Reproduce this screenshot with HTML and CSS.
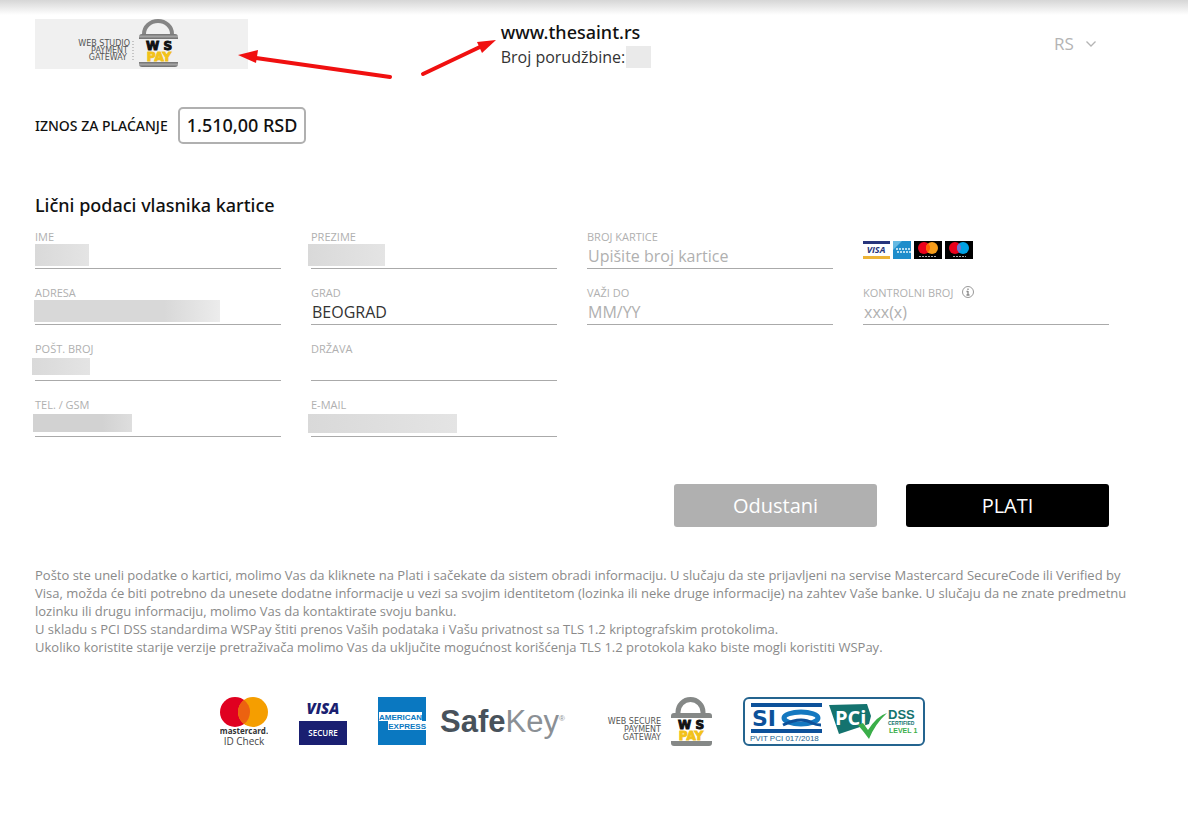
FILE: index.html
```html
<!DOCTYPE html>
<html lang="sr">
<head>
  <meta charset="UTF-8">
  <meta name="viewport" content="width=device-width, initial-scale=1.0">
  <title>WSPay</title>
  <link rel="stylesheet" href="styles.css">
</head>
<body>
  <div class="page">
    <header class="header">
      <div class="logo">
        <svg width="213" height="50" viewBox="0 0 213 50" role="img" aria-label="WSPay">
          <defs>
            <linearGradient id="steel" x1="0" y1="0" x2="0" y2="1">
              <stop offset="0" stop-color="#707070"/>
              <stop offset="0.5" stop-color="#a2a2a2"/>
              <stop offset="1" stop-color="#6c6c6c"/>
            </linearGradient>
          </defs>
          <g class="logo-caption" text-anchor="end">
            <text x="95" y="27">WEB STUDIO</text>
            <text x="93" y="34">PAYMENT</text>
            <text x="92" y="41">GATEWAY</text>
          </g>
          <path d="M98 22v20" stroke="#999" stroke-dasharray="1 2"/>
          <path d="M109 16v-1a14 13 0 0 1 28 0v1" fill="none" stroke="#858585" stroke-width="4"/>
          <path d="M104 20v-2q0-3 3-3h33q3 0 3 3v2z" fill="url(#steel)"/>
          <path d="M104 43h39v2q0 3-3 3h-33q-3 0-3-3z" fill="url(#steel)"/>
          <text class="lock-text" x="124" y="31" text-anchor="middle">W S</text>
          <text class="lock-text lock-gold" x="124" y="42" text-anchor="middle">PAY</text>
        </svg>
      </div>
      <div class="shop">
        <a class="shop-name" href="#">www.thesaint.rs</a>
        <div class="order">Broj porudžbine: <span class="order-mask"></span></div>
      </div>
      <label class="lang">
        <select aria-label="Jezik">
          <option>RS</option>
          <option>EN</option>
        </select>
        <svg width="12" height="8" viewBox="0 0 12 8"><path d="M1.500 1.500l4.500 4.500 4.500-4.500" fill="none" stroke="#b4b4b4" stroke-width="1.300"/></svg>
      </label>
    </header>

    <svg class="arrows" width="270" height="50" viewBox="0 0 270 50">
      <g stroke="#f01010" stroke-width="4" stroke-linecap="round">
        <path d="M152 45L18 26"/>
        <path d="M185 42L244 14"/>
      </g>
      <path d="M0 23L20 18L18 31z" fill="#f01010"/>
      <path d="M258 8L239 10L244 21z" fill="#f01010"/>
    </svg>

    <div class="amount">
      <span class="amount-label">IZNOS ZA PLAĆANJE</span>
      <span class="amount-value">1.510,00 RSD</span>
    </div>

    <form>
      <h1>Lični podaci vlasnika kartice</h1>
      <div class="fields">
        <div class="field">
          <label for="ime">IME</label>
          <input type="text" id="ime">
          <span class="mask mask-ime"></span>
        </div>
        <div class="field">
          <label for="prezime">PREZIME</label>
          <input type="text" id="prezime">
          <span class="mask mask-prezime"></span>
        </div>
        <div class="field">
          <label for="kartica">BROJ KARTICE</label>
          <input type="text" id="kartica" placeholder="Upišite broj kartice">
        </div>
        <div class="cards">
          <svg width="27" height="18" viewBox="0 0 27 18">
            <path d="M0 0h27v3H0z" fill="#28357c"/>
            <path d="M0 15h27v3H0z" fill="#edb436"/>
            <text class="visa-small" x="13" y="12" text-anchor="middle">VISA</text>
          </svg>
          <svg width="18" height="18" viewBox="0 0 18 18">
            <path d="M0 0h18v18H0z" fill="#1f8dcb"/>
            <path d="M0 0h9L0 9z" fill="#65b9e2"/>
            <path d="M3 8h14M4 11h14" stroke="#b5dcf1" stroke-width="2" stroke-dasharray="2 1"/>
          </svg>
          <svg width="28" height="18" viewBox="0 0 28 18">
            <path d="M0 0h28v18H0z" fill="#000"/>
            <circle cx="10" cy="7" r="6" fill="#eb001b"/>
            <circle cx="18" cy="7" r="6" fill="#f79e1b"/>
            <path d="M14 2.500a6 6 0 0 1 0 9a6 6 0 0 1 0-9z" fill="#ff5f00"/>
            <path d="M5 15.500h18" stroke="#aaa" stroke-dasharray="2 1"/>
          </svg>
          <svg width="28" height="18" viewBox="0 0 28 18">
            <path d="M0 0h28v18H0z" fill="#000"/>
            <circle cx="10" cy="7" r="6" fill="#eb001b"/>
            <circle cx="18" cy="7" r="6" fill="#00a2e5"/>
            <path d="M14 2.500a6 6 0 0 1 0 9a6 6 0 0 1 0-9z" fill="#7375cf"/>
            <path d="M8 15.500h13" stroke="#aaa" stroke-dasharray="2 1"/>
          </svg>
        </div>

        <div class="field">
          <label for="adresa">ADRESA</label>
          <input type="text" id="adresa">
          <span class="mask mask-adresa"></span>
        </div>
        <div class="field">
          <label for="grad">GRAD</label>
          <input type="text" id="grad" value="BEOGRAD">
        </div>
        <div class="field">
          <label for="vazi">VAŽI DO</label>
          <input type="text" id="vazi" placeholder="MM/YY">
        </div>
        <div class="field">
          <label for="cvv">KONTROLNI BROJ
            <svg width="14" height="14" viewBox="0 0 14 14">
              <circle cx="7" cy="7" r="5.500" fill="none" stroke="#999"/>
              <path d="M7 3.500v1.500M7 6v4M5.500 6.500h1.500M5.500 10h3" stroke="#888" stroke-width="1.300"/>
            </svg>
          </label>
          <input type="text" id="cvv" placeholder="xxx(x)">
        </div>

        <div class="field first">
          <label for="posta">POŠT. BROJ</label>
          <input type="text" id="posta">
          <span class="mask mask-posta"></span>
        </div>
        <div class="field">
          <label for="drzava">DRŽAVA</label>
          <input type="text" id="drzava">
        </div>

        <div class="field first">
          <label for="tel">TEL. / GSM</label>
          <input type="text" id="tel">
          <span class="mask mask-tel"></span>
        </div>
        <div class="field">
          <label for="email">E-MAIL</label>
          <input type="text" id="email">
          <span class="mask mask-email"></span>
        </div>
      </div>

      <div class="buttons">
        <button type="button" class="cancel">Odustani</button>
        <button type="submit">PLATI</button>
      </div>
    </form>

    <div class="notice">
      <p>Pošto ste uneli podatke o kartici, molimo Vas da kliknete na Plati i sačekate da sistem obradi informaciju. U slučaju da ste prijavljeni na servise Mastercard SecureCode ili Verified by Visa, možda će biti potrebno da unesete dodatne informacije u vezi sa svojim identitetom (lozinka ili neke druge informacije) na zahtev Vaše banke. U slučaju da ne znate predmetnu lozinku ili drugu informaciju, molimo Vas da kontaktirate svoju banku.</p>
      <p>U skladu s PCI DSS standardima WSPay štiti prenos Vaših podataka i Vašu privatnost sa TLS 1.2 kriptografskim protokolima.</p>
      <p>Ukoliko koristite starije verzije pretraživača molimo Vas da uključite mogućnost korišćenja TLS 1.2 protokola kako biste mogli koristiti WSPay.</p>
    </div>

    <footer class="badges">
      <svg width="48" height="50" viewBox="0 0 48 50">
        <circle cx="15" cy="15" r="15" fill="#e00020"/>
        <circle cx="33" cy="15" r="15" fill="#f59e00"/>
        <path d="M24 3a15 15 0 0 1 0 24a15 15 0 0 1 0-24z" fill="#ec6210"/>
        <text class="mc-name" x="24" y="37" text-anchor="middle">mastercard.</text>
        <text class="mc-check" x="24" y="48" text-anchor="middle">ID Check</text>
      </svg>
      <svg width="48" height="48" viewBox="0 0 48 48">
        <text class="visa-name" x="24" y="17" text-anchor="middle">VISA</text>
        <path d="M0 24h48v24H0z" fill="#1a1f71"/>
        <text class="visa-secure" x="24" y="39" text-anchor="middle">SECURE</text>
      </svg>
      <svg width="188" height="48" viewBox="0 0 188 48">
        <path d="M0 0h48v48H0z" fill="#0a78c1"/>
        <path d="M1 15h43v9h4v9H10v-9H1z" fill="#fff"/>
        <text class="amex-name" x="1" y="23">AMERICAN</text>
        <text class="amex-name" x="48" y="32" text-anchor="end">EXPRESS</text>
        <text class="safe" x="62" y="35">Safe<tspan class="key">Key</tspan></text>
        <text class="reg" x="181" y="24">®</text>
      </svg>
      <svg width="115" height="50" viewBox="0 0 115 50">
        <g class="logo-caption" text-anchor="end">
          <text x="64" y="27">WEB SECURE</text>
          <text x="64" y="35">PAYMENT</text>
          <text x="64" y="43">GATEWAY</text>
        </g>
        <path d="M81 17v-2a12.500 12.500 0 0 1 25 0v2" fill="none" stroke="#858887" stroke-width="5"/>
        <path d="M74 21v-2q0-3 3-3h35q3 0 3 3v2z" fill="#858887"/>
        <path d="M74 44h41v2q0 3-3 3h-35q-3 0-3-3z" fill="#858887"/>
        <text class="lock-text" x="94" y="32" text-anchor="middle">W S</text>
        <text class="lock-text lock-gold" x="94" y="43" text-anchor="middle">PAY</text>
      </svg>
      <svg width="182" height="49" viewBox="0 0 182 49">
        <rect x="1" y="1" width="180" height="47" rx="5" fill="#fff" stroke="#24648f" stroke-width="2"/>
        <path d="M8 6h71v4H8zM8 32h71v4H8z" fill="#0d519a"/>
        <text class="siq" x="9" y="29">SI</text>
        <ellipse cx="58" cy="21" rx="17" ry="6" fill="none" stroke="#1478c0" stroke-width="5"/>
        <path d="M40 28q18-9 29-2q4 2 9 2" fill="none" stroke="#0d519a" stroke-width="3"/>
        <text class="siq-note" x="7" y="44">PVIT PCI 017/2018</text>
        <path d="M86 8l38-1 4 12-2 8-30 10z" fill="#14736f"/>
        <text class="pci" x="92" y="28">PCi</text>
        <path d="M115 28l5-2 5 7q9-14 19-17q-12 11-18 26q-5-7-11-14z" fill="#3aae49"/>
        <text class="dss" x="145" y="22">DSS</text>
        <text class="certified" x="145" y="28">CERTIFIED</text>
        <text class="level" x="146" y="36">LEVEL 1</text>
      </svg>
    </footer>
  </div>
</body>
</html>
```
FILE: styles.css
```css
* {
  box-sizing: border-box;
}
body {
  margin: 0;
  font-family: "Open Sans", sans-serif;
  background: linear-gradient(#d6d6d6, #fff 15px) no-repeat #fff;
  color: #111;
}
.page {
  position: relative;
  padding: 19px 79px 40px 35px;
}
.header {
  display: grid;
  grid-template-columns: 1fr auto 1fr;
  align-items: start;
}
.logo svg {
  display: block;
  background: #f0f0f0;
}
.logo-caption {
  font: 8px "DejaVu Sans", sans-serif;
  fill: #555;
}
.lock-text {
  font: bold 12px "DejaVu Sans", sans-serif;
  fill: #111;
  stroke: #111;
  stroke-width: 1px;
}
.lock-gold {
  fill: #f2c21a;
  stroke: #f2c21a;
}
.shop {
  padding-left: 8px;
}
.shop-name, .amount, h1 {
  font-family: "Noto Sans", sans-serif;
  font-weight: 500;
}
.shop-name {
  display: block;
  font-size: 18px;
  line-height: 26px;
  color: #111;
  text-decoration: none;
}
.order {
  display: flex;
  align-items: center;
  gap: 1px;
  font-size: 16px;
  line-height: 24px;
  color: #333;
}
.order-mask {
  width: 25px;
  height: 22px;
  background: #eaeaea;
}
.lang {
  display: flex;
  align-items: center;
  justify-self: end;
  gap: 8px;
  padding: 13px 12px 0 0;
}
.lang select {
  appearance: none;
  border: none;
  background: none;
  padding: 0;
  font: 17px "Open Sans", sans-serif;
  color: #b4b4b4;
}
/* red pointers over the header */
.arrows {
  position: absolute;
  left: 238px;
  top: 32px;
  pointer-events: none;
}
.amount {
  display: flex;
  align-items: center;
  gap: 10px;
  margin-top: 38px;
}
.amount-label {
  font-size: 14px;
}
.amount-value {
  padding: 4px 7px;
  border: 2px solid #b0b0b0;
  border-radius: 5px;
  font-size: 18px;
  line-height: 25px;
}
h1 {
  margin: 48px 0 11px;
  font-size: 18px;
  line-height: 26px;
}
.fields {
  display: grid;
  grid-template-columns: repeat(4, 1fr);
  gap: 16px 30px;
}
.field {
  position: relative;
  display: flex;
  flex-direction: column;
}
.field.first {
  grid-column-start: 1;
}
.field label {
  display: flex;
  align-items: center;
  gap: 8px;
  height: 14px;
  font-size: 11px;
  color: #b0b0b0;
}
.field input {
  width: 100%;
  height: 26px;
  padding: 0 1px;
  border: none;
  border-bottom: 1px solid #aaa;
  background: none;
  font: 16px "Open Sans", sans-serif;
  color: #333;
}
.field input::placeholder {
  color: #b0b0b0;
}
/* hidden personal data */
.mask {
  position: absolute;
  left: 0;
  top: 15px;
  height: 22px;
  background: linear-gradient(90deg, #d9d9d9, #e4e4e4);
}
.mask-ime {
  width: 54px;
}
.mask-prezime {
  left: -3px;
  width: 77px;
}
.mask-adresa {
  left: -1px;
  width: 186px;
  background: linear-gradient(90deg, #d8d8d8 70%, #ececec);
}
.mask-posta {
  left: -3px;
  top: 17px;
  width: 58px;
  height: 17px;
}
.mask-tel {
  left: -2px;
  top: 17px;
  width: 99px;
  height: 18px;
  background: linear-gradient(90deg, #d2d2d2 70%, #dedede);
}
.mask-email {
  left: -3px;
  top: 17px;
  width: 149px;
  height: 19px;
}
.cards {
  display: flex;
  gap: 3px;
  padding-top: 12px;
}
.visa-small {
  font: italic bold 9px "Open Sans", sans-serif;
  fill: #28357c;
}
.buttons {
  display: flex;
  justify-content: flex-end;
  gap: 29px;
  margin-top: 47px;
}
button {
  width: 203px;
  height: 43px;
  border: none;
  border-radius: 3px;
  background: #000;
  color: #fff;
  font: 20px "Open Sans", sans-serif;
  cursor: pointer;
}
button.cancel {
  background: #b0b0b0;
}
.notice {
  margin: 39px -24px 0 0;
  font-size: 13px;
  line-height: 18px;
  color: #8a8a8a;
}
.notice p {
  margin: 0;
}
.badges {
  display: flex;
  justify-content: center;
  align-items: flex-start;
  gap: 31px;
  margin-top: 41px;
}
.mc-name {
  font: bold 8px "Open Sans", sans-serif;
  fill: #333;
}
.mc-check {
  font: 10px "Open Sans", sans-serif;
  fill: #444;
}
.visa-name {
  font: italic 800 15px "Open Sans", sans-serif;
  fill: #1a1f71;
}
.visa-secure {
  font: 600 8px "Open Sans", sans-serif;
  fill: #fff;
}
.amex-name {
  font: bold 8px "Liberation Sans", sans-serif;
  fill: #0a78c1;
}
.safe {
  font: bold 31px "Liberation Sans", sans-serif;
  fill: #48525b;
}
.key {
  font-weight: normal;
  fill: #8b9095;
}
.reg {
  font: 8px "Liberation Sans", sans-serif;
  fill: #8b9095;
}
.siq {
  font: bold 22px "DejaVu Sans", sans-serif;
  fill: #0d519a;
}
.siq-note {
  font: 8px "Liberation Sans", sans-serif;
  fill: #24648f;
}
.pci {
  font: bold 20px "Open Sans", sans-serif;
  fill: #fff;
}
.dss {
  font: bold 13px "Liberation Sans", sans-serif;
  fill: #14736f;
}
.certified {
  font: bold 5px "Liberation Sans", sans-serif;
  fill: #14736f;
}
.level {
  font: bold 7px "Liberation Sans", sans-serif;
  fill: #3aae49;
}
```
